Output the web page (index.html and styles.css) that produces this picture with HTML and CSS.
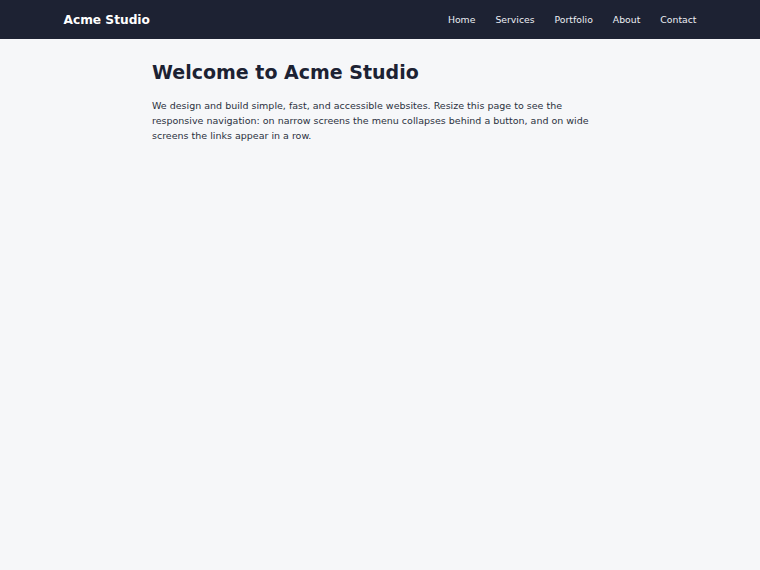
FILE: index.html
```html
<!DOCTYPE html>
<html lang="en">
<head>
    <meta charset="UTF-8">
    <meta name="viewport" content="width=device-width, initial-scale=1.0">
    <title>Acme Studio</title>
    <link rel="stylesheet" href="styles.css">
</head>
<body>
    <header class="site-header">
        <nav class="navbar">
            <a href="#" class="brand">Acme Studio</a>
            <ul class="nav-links">
                <li><a href="#">Home</a></li>
                <li><a href="#">Services</a></li>
                <li><a href="#">Portfolio</a></li>
                <li><a href="#">About</a></li>
                <li><a href="#">Contact</a></li>
            </ul>
        </nav>
    </header>

    <main class="content">
        <h1>Welcome to Acme Studio</h1>
        <p>We design and build simple, fast, and accessible websites. Resize this page to see the responsive navigation: on narrow screens the menu collapses behind a button, and on wide screens the links appear in a row.</p>
    </main>
</body>
</html>
```

FILE: styles.css
```css
body {
    font-family: "DejaVu Sans", sans-serif;
    margin: 0;
    padding: 0;
    background-color: #f6f7f9;
    color: #1c2233;
}

.site-header {
    background-color: #1d2233;
    height: 39px;
}

.navbar {
    max-width: 633px;
    height: 100%;
    margin: 0 auto;
    display: flex;
    justify-content: space-between;
    align-items: center;
}

.brand {
    color: #fff;
    font-size: 12.2px;
    font-weight: bold;
    text-decoration: none;
}

.nav-links {
    list-style: none;
    margin: 0;
    padding: 0;
    display: flex;
    gap: 20px;
    font-size: 9.3px;
    line-height: 1.2;
}

.nav-links a {
    color: #eceef3;
    text-decoration: none;
}

.nav-links a:hover {
    text-decoration: underline;
}

.content {
    max-width: 456px;
    margin: 0 auto;
    padding-top: 22px;
}

.content h1 {
    font-size: 19px;
    margin: 0 0 15px;
}

.content p {
    font-size: 9.5px;
    line-height: 15px;
    margin: 0;
    color: #2b3140;
}
```
